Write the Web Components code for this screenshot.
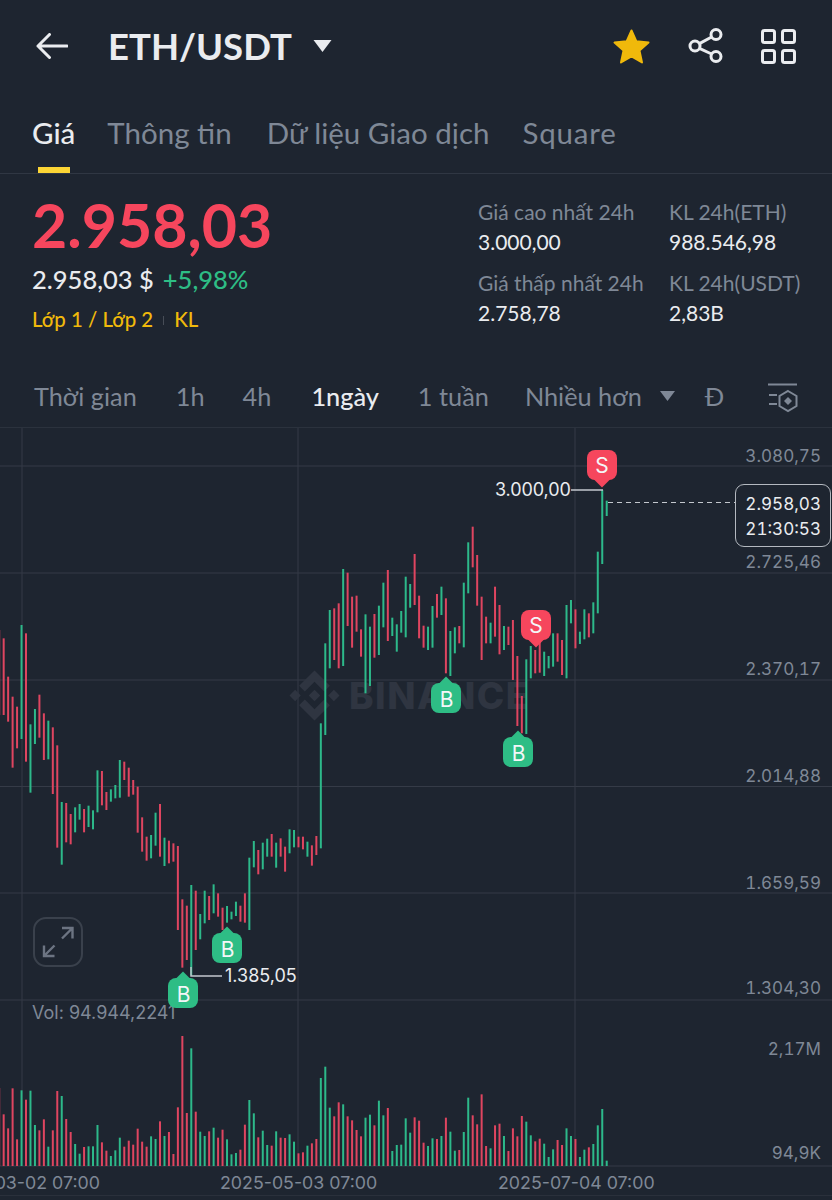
<!DOCTYPE html>
<html lang="vi"><head><meta charset="utf-8"><title>ETH/USDT</title>
<style>
html,body{margin:0;padding:0;background:#1e2530;}
body{width:832px;height:1200px;overflow:hidden;font-family:"Lato","Noto Sans",sans-serif;color:#eaecef;}
</style></head><body>
<app-header></app-header>
<market-tabs></market-tabs>
<price-panel></price-panel>
<interval-bar></interval-bar>
<kline-chart></kline-chart>
<script>
const def=(name,html,extra)=>{customElements.define(name,class extends HTMLElement{
  constructor(){super();this.attachShadow({mode:'open'}).innerHTML=html;}
  connectedCallback(){extra&&extra.call(this);}
});};
const FONT='"Lato","Noto Sans",sans-serif';

def('app-header',`<style>
:host{display:flex;align-items:center;height:92px;padding:0 35px 0 36px;box-sizing:border-box;}
h1{margin:0 0 0 40px;font:700 36.5px ${FONT};color:#eaecef;}
svg{display:block}
.caret{margin-left:21px}
.sp{flex:1}
.star{margin-right:38px}
.share{margin-right:38px}
</style>
<svg width="32" height="26" viewBox="0 0 32 26" fill="none" stroke="#eaecef" stroke-width="3" stroke-linecap="round" stroke-linejoin="round"><path d="M2 13H31M13.500 1.500 2 13l11.500 11.500"/></svg>
<h1>ETH/USDT</h1>
<svg class="caret" width="19" height="12" viewBox="0 0 19 12"><path d="M0.500 0H18.500L9.500 12Z" fill="#eaecef"/></svg>
<span class="sp"></span>
<svg class="star" width="37" height="35" viewBox="0 0 37 35"><path d="M18.500 1.500 23.400 12.300 35.500 13.600 26.500 21.600 29 33.500 18.500 27.500 8 33.500 10.500 21.600 1.500 13.600 13.600 12.300Z" fill="#f0b90b" stroke="#f0b90b" stroke-width="2" stroke-linejoin="round"/></svg>
<svg class="share" width="35" height="36" viewBox="0 0 35 36" fill="none" stroke="#eaecef" stroke-width="3"><circle cx="28" cy="6.500" r="5"/><circle cx="7" cy="18" r="5"/><circle cx="28" cy="28.500" r="5"/><path d="M23.600 9 11.400 15.600M11.400 20.400 23.600 26"/></svg>
<svg width="36" height="35" viewBox="0 0 36 35" fill="none" stroke="#eaecef" stroke-width="3"><rect x="1.500" y="1.500" width="12" height="12" rx="2"/><rect x="21.500" y="1.500" width="12" height="12" rx="2"/><rect x="1.500" y="21.500" width="12" height="12" rx="2"/><rect x="21.500" y="21.500" width="12" height="12" rx="2"/></svg>
`);

def('market-tabs',`<style>
:host{display:flex;height:82px;box-sizing:border-box;padding:21px 0 0 32px;border-bottom:1px solid #303743;font:400 29.5px ${FONT};color:#7f8896;}
span{position:relative;line-height:40px;height:40px;}
.on{color:#eaecef;font-weight:500}
.on::after{content:"";position:absolute;left:6px;width:32px;height:6px;top:54px;background:#fcd535;}
</style>
<span class="on">Giá</span><span style="margin-left:32px">Thông tin</span><span style="margin-left:35px">Dữ liệu Giao dịch</span><span style="margin-left:33px;letter-spacing:.8px">Square</span>`);

def('stat-cell',`<style>
:host{display:block;font:400 21px/30px ${FONT};}
.l{color:#7f8896;white-space:nowrap}.v{color:#eaecef;white-space:nowrap}
</style><div class="l"><slot name="l"></slot></div><div class="v"><slot name="v"></slot></div>`);

def('price-panel',`<style>
:host{display:flex;justify-content:space-between;height:196px;box-sizing:border-box;padding:19px 0 0 32px;}
.price{font:700 60.8px/64px ${FONT};color:#f6465d;}
.sub{display:flex;gap:9px;font:500 25.5px/30px ${FONT};margin-top:7px}
.up{color:#2ebd85}
.tag{display:flex;align-items:center;font:500 20.4px/24px ${FONT};color:#f0b90b;margin-top:13px;}
.tag i{width:1px;height:9px;background:#474d57;margin:3px 10px 0}
.stats{display:grid;grid-template-columns:191px 163px;row-gap:11px;align-content:start;padding-top:4px;}
</style>
<div><div class="price">2.958,03</div>
<div class="sub"><span>2.958,03 $</span><span class="up">+5,98%</span></div>
<div class="tag"><span>Lớp 1 / Lớp 2</span><i></i><span>KL</span></div></div>
<div class="stats">
<stat-cell><span slot="l">Giá cao nhất 24h</span><span slot="v">3.000,00</span></stat-cell>
<stat-cell><span slot="l">KL 24h(ETH)</span><span slot="v">988.546,98</span></stat-cell>
<stat-cell><span slot="l">Giá thấp nhất 24h</span><span slot="v">2.758,78</span></stat-cell>
<stat-cell><span slot="l">KL 24h(USDT)</span><span slot="v">2,83B</span></stat-cell>
</div>`);

def('interval-bar',`<style>
:host{display:flex;align-items:center;height:58px;box-sizing:border-box;padding:0 32px 6px 34px;border-bottom:1px solid #2b323d;font:400 25.3px ${FONT};color:#7f8896;}
.on{color:#eaecef;font-weight:500}
svg{display:block}
span{white-space:nowrap}
</style>
<span>Thời gian</span><span style="margin-left:39px">1h</span><span style="margin-left:38px">4h</span>
<span class="on" style="margin-left:40px">1ngày</span><span style="margin-left:39px">1 tuần</span><span style="margin-left:36px">Nhiều hơn</span>
<svg style="margin-left:18px" width="15" height="10" viewBox="0 0 15 10"><path d="M0 0H15L7.500 10Z" fill="#7f8896"/></svg>
<span style="margin-left:30px">Đ</span>
<svg style="margin-left:auto;margin-top:4px" width="32" height="30" viewBox="0 0 32 30" fill="none" stroke="#7f8896" stroke-width="2"><path d="M0 1.500H29M1 12H9M1 21H9"/><path d="M20 8 28.500 13V23L20 28 11.500 23V13Z"/><path d="M20 14 24 18 20 22 16 18Z" fill="#7f8896" stroke="none"/></svg>`);

def('trade-marker',`<style>
:host{position:absolute;width:30px;height:35px;display:block;font:400 21px ${'"Inter",sans-serif'};color:#f4f6f8;}
.b{position:absolute;left:0;width:30px;height:30px;border-radius:8px;display:flex;align-items:center;justify-content:center;background:var(--c);}
.t{position:absolute;left:9px;width:12px;height:12px;background:var(--c);transform:rotate(45deg);}
:host([kind=B]) .b{top:5px;padding-top:2px;box-sizing:border-box;padding-left:1px}
:host([kind=B]) .t{top:1px}
:host([kind=S]) .b{top:0}
:host([kind=S]) .t{top:23px}
:host([kind=B]){--c:#2ebd85}
:host([kind=S]){--c:#f6465d}
</style><div class="t"></div><div class="b"><slot></slot></div>`);

const red='#df4560',green='#2db98a';
const A=`r 115 345;r 230 365;r 290 503;r 320 445;g 75 417;r 100 485;g 373 578;g 327 432;r 284 413;r 340 480;g 362 478;r 382 582;r 436 743;g 606 794;r 609 727;r 642 733;g 622 697;g 612 659;r 627 697;g 617 681;g 631 688;g 511 637;r 513 616;r 576 630;g 568 605;g 555 595;g 480 593;r 485 540;r 503 590;r 540 584;r 560 698;r 652 755;r 710 782;g 705 775;g 638 737;r 612 770;g 713 798;r 722 790;r 730 785;r 738 990;r 898 1103;r 917 1080;g 855 1127;r 872 1050;g 942 1018;g 872 970;r 888 960;g 853 940;r 880 950;r 923 990;g 918 968;g 935 958;g 905 948;r 917 965;r 880 968;g 773 990;g 723 802;r 750 823;g 728 808;g 716 770;r 702 770;g 728 803;r 715 770;r 740 815;g 688 760;g 690 742;r 710 742;r 710 748;g 725 770;r 736 797;r 708 765;g 370 745;g 130 405`.split(';').map(s=>s.trim().split(' '));
const B=`g 540 715;r 535 690;r 520 715;g 417 708;r 428 588;r 500 653;r 497 605;r 598 680;g 553 790;g 590 768;r 552 683;g 527 675;g 458 592;r 420 633;g 563 618;g 583 665;g 543 608;g 440 622;g 462 533;r 372 525;r 497 625;r 587 653;g 590 660;g 528 653;r 492 563;g 470 555;r 505 730;g 603 738;g 592 670;r 588 640;g 458 652;g 337 490;r 290 412;r 375 527;r 500 690;r 560 640;g 578 640;r 470 620;r 525 673;g 588 660;r 590 645;r 570 750;r 678 888;r 798 910;g 688 912;g 648 745;r 660 730;r 630 728;g 665 738;g 678 715;g 610 710;r 610 695;r 630 735;g 525 745;g 510 580;r 538 655;g 605 642;g 538 628;r 550 622;g 517 610;g 365 550;g 180 402;g 212 258`.split(';').map(s=>s.trim().split(' '));
const V=`343 385 265 418 271 299 272 375 391 358 440 391 273 288 357 396 432 461 441 439 439 375 427 452 468 451 413 440 422 434 386 425 440 409 417 364 408 396 462 322 108 339 145 335 395 408 394 383 413 389 418 463 459 449 374 300 340 412 392 435 437 394 413 414 403 425 460 457 437 430 417 234 200 323 349 307 313 349 361 390 409 353 344 376 302 346 324 453 435 434 355 398 352 362 428 438 415 417 408 353 395 452 450 396 293 346 373 283 438 445 376 371 408 453 385 409 348 365 406 424 416 431 471 448 420 435 385 408 417 471 449 442 432 376 327 482`.split(' ').map(Number);
const dir=[...A,...B].map(a=>a[0]);
let svg='';
const x=i=>3.67+4.467*i;
[466,573,680,786.500,893,1000,1166].forEach(y=>svg+=`<rect x="0" y="${y-.5}" width="832" height="1" fill="#353b47"/>`);
[22,298,575].forEach(v=>svg+=`<rect x="${v-.5}" y="428" width="1" height="738" fill="#353b47"/>`);
svg+=`<rect x="0" y="1195" width="832" height="1" fill="#2a303b"/>`;
svg+=`<g transform="translate(289.500 670.500) scale(.395)" fill="#2f3541"><path d="M38.730 53.200l24.590-24.580 24.600 24.600 14.300-14.310L63.320 0 24.430 38.900zM0 63.310l14.300-14.310 14.310 14.310-14.310 14.300zM38.730 73.410L63.320 98l24.600-24.600 14.310 14.290-38.900 38.910-38.910-38.880-.02-.02zM98 63.310l14.300-14.310 14.310 14.300-14.310 14.320zM77.830 63.300L63.320 48.780 52.590 59.510l-1.240 1.230-2.540 2.540 14.510 14.500 14.510-14.470z"/></g>`;
svg+=`<text x="349" y="709" font-family="Inter,sans-serif" font-weight="800" font-size="37" letter-spacing="1.500" fill="#2f3541">BINANCE</text>`;
const bar=(cx,t,b,c)=>`<rect x="${(cx-1).toFixed(2)}" y="${t.toFixed(2)}" width="2" height="${(b-t).toFixed(2)}" fill="${c}"/>`;
svg+=bar(-0.8,630,715,red);
A.forEach((a,i)=>svg+=bar(x(i),600+ +a[1]/3,600+ +a[2]/3,a[0]=='r'?red:green));
B.forEach((a,j)=>svg+=bar(x(A.length+j),430+ +a[1]/3,430+ +a[2]/3,a[0]=='r'?red:green));
svg+=bar(-0.8,1088,1166,red);
V.forEach((t,i)=>svg+=bar(x(i),1000+t/3,1166,dir[i]=='r'?red:green));
svg+=`<path d="M571 490H603M191 967V976H222" fill="none" stroke="#c4c8ce" stroke-width="1.400"/>`;
svg+=`<path d="M608 502.500H735" stroke="#c4c8ce" stroke-width="1" stroke-dasharray="5 4"/>`;

const axis=[['3.080,75',456],['2.725,46',562],['2.370,17',669],['2.014,88',776],['1.659,59',883],['1.304,30',988],['2,17M',1049],['94,9K',1153]];
const lab=axis.map(([t,y])=>`<span class="ax" style="right:11px;top:${y-428-12}px">${t}</span>`).join('');

def('kline-chart',`<style>
:host{display:block;position:relative;height:772px;overflow:hidden;font:400 18px "Inter",sans-serif;color:#7f8896;}
svg.c{position:absolute;left:0;top:0;display:block}
span{position:absolute;line-height:24px;white-space:nowrap}
.ax{font-size:17.1px;font-variant-numeric:tabular-nums}
.w{color:#eaecef}
.d{top:743px;font-size:17.8px}
.tagp{position:absolute;left:735px;top:56px;width:96px;height:63px;box-sizing:border-box;border:1.500px solid #b4b9c0;border-radius:9px;background:#1e2530;color:#eaecef;text-align:right;padding:6px 9px 0 0;line-height:25px;font-size:17.1px;font-variant-numeric:tabular-nums;}
.ex{position:absolute;left:33px;top:489px;display:block}
</style>
<svg class="c" width="832" height="772" viewBox="0 428 832 772">${svg}</svg>
${lab}
<span class="w" style="left:495px;top:50px;letter-spacing:-.1px">3.000,00</span>
<span class="w" style="left:225px;top:536px">1.385,05</span>
<span style="left:32px;top:573px">Vol: 94.944,2241</span>
<span class="d" style="right:732px">03-02 07:00</span>
<span class="d" style="left:220px">2025-05-03 07:00</span>
<span class="d" style="left:498px">2025-07-04 07:00</span>
<div class="tagp">2.958,03<br>21:30:53</div>
<svg class="ex" width="50" height="50" viewBox="0 0 50 50" fill="none"><rect x="1" y="1" width="48" height="48" rx="12" stroke="#3a414c" stroke-width="2"/><path d="M29 11H39.500V21.500M39.500 11 29 21.500M11 28.500V39H21.500M11 39 21.500 28.500" stroke="#6c7482" stroke-width="2.400"/></svg>
<trade-marker kind="B" style="left:168px;top:545px">B</trade-marker>
<trade-marker kind="B" style="left:212px;top:500px">B</trade-marker>
<trade-marker kind="B" style="left:431px;top:250px">B</trade-marker>
<trade-marker kind="B" style="left:503px;top:304px">B</trade-marker>
<trade-marker kind="S" style="left:521px;top:182px">S</trade-marker>
<trade-marker kind="S" style="left:587px;top:22px">S</trade-marker>`);
</script>
</body></html>
